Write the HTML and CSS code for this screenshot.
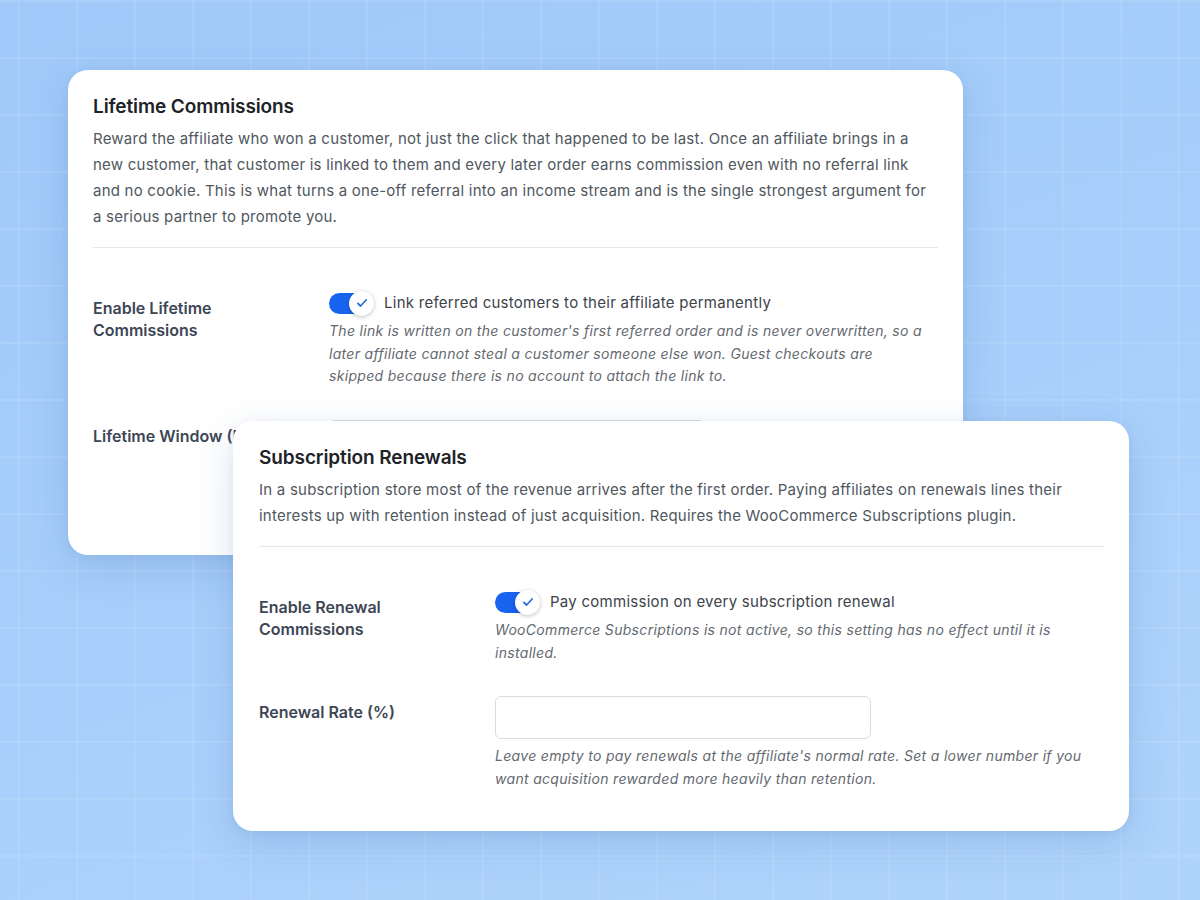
FILE: index.html
```html
<!DOCTYPE html>
<html lang="en">
<head>
<meta charset="utf-8">
<title>Affiliate settings</title>
<link rel="stylesheet" href="styles.css">
</head>
<body>
<main class="stage">

  <section class="card card-lifetime">
    <h2 class="card-title">Lifetime Commissions</h2>
    <p class="card-desc">Reward the affiliate who won a customer, not just the click that happened to be last. Once an affiliate brings in a new customer, that customer is linked to them and every later order earns commission even with no referral link and no cookie. This is what turns a one-off referral into an income stream and is the single strongest argument for a serious partner to promote you.</p>
    <hr class="divider">
    <div class="rows">
      <div class="row">
        <div class="row-label">Enable Lifetime<br>Commissions</div>
        <div class="row-field">
          <label class="toggle-line">
            <span class="toggle" aria-checked="true" role="switch">
              <span class="knob">
                <svg viewBox="0 0 24 24" width="18" height="18"><path d="M6.5 12.5l3.5 3.5 7.5-8" fill="none" stroke="#2b6fd6" stroke-width="2.4" stroke-linecap="round" stroke-linejoin="round"/></svg>
              </span>
            </span>
            <span>Link referred customers to their affiliate permanently</span>
          </label>
          <p class="hint">The link is written on the customer's first referred order and is never overwritten, so a later affiliate cannot steal a customer someone else won. Guest checkouts are skipped because there is no account to attach the link to.</p>
        </div>
      </div>
      <div class="row">
        <div class="row-label">Lifetime Window (Days)</div>
        <div class="row-field">
          <input class="text-input" type="text">
        </div>
      </div>
    </div>
  </section>

  <section class="card card-renewals">
    <h2 class="card-title">Subscription Renewals</h2>
    <p class="card-desc">In a subscription store most of the revenue arrives after the first order. Paying affiliates on renewals lines their interests up with retention instead of just acquisition. Requires the WooCommerce Subscriptions plugin.</p>
    <hr class="divider">
    <div class="rows">
      <div class="row">
        <div class="row-label">Enable Renewal<br>Commissions</div>
        <div class="row-field">
          <label class="toggle-line">
            <span class="toggle" aria-checked="true" role="switch">
              <span class="knob">
                <svg viewBox="0 0 24 24" width="18" height="18"><path d="M6.5 12.5l3.5 3.5 7.5-8" fill="none" stroke="#2b6fd6" stroke-width="2.4" stroke-linecap="round" stroke-linejoin="round"/></svg>
              </span>
            </span>
            <span>Pay commission on every subscription renewal</span>
          </label>
          <p class="hint">WooCommerce Subscriptions is not active, so this setting has no effect until it is installed.</p>
        </div>
      </div>
      <div class="row">
        <div class="row-label">Renewal Rate (%)</div>
        <div class="row-field">
          <input class="text-input" type="text">
          <p class="hint">Leave empty to pay renewals at the affiliate's normal rate. Set a lower number if you want acquisition rewarded more heavily than retention.</p>
        </div>
      </div>
    </div>
  </section>

</main>
</body>
</html>
```

FILE: styles.css
```css
* {
  box-sizing: border-box;
}

html,
body {
  margin: 0;
  height: 100%;
}

body {
  font-family: Inter, "Noto Sans", "Liberation Sans", sans-serif;
  color: #1d2327;
  background-color: #a6cdfa;
  background-image:
    linear-gradient(to right, rgba(255, 255, 255, 0.09) 2px, transparent 2px),
    linear-gradient(to bottom, rgba(255, 255, 255, 0.09) 2px, transparent 2px),
    linear-gradient(160deg, #a0c9f9 0%, #a8cffb 55%, #afd4fc 100%);
  background-size: 58px 57px, 58px 57px, 100% 100%;
  background-position: 18px 0, 0 0, 0 0;
  overflow: hidden;
}

.stage {
  position: relative;
  width: 1200px;
  height: 900px;
}

/* floating settings panels */
.card {
  position: absolute;
  background: #ffffff;
  border-radius: 20px;
  padding: 25px 25px 24px;
  box-shadow: 0 12px 40px rgba(40, 80, 140, 0.16), 0 2px 8px rgba(40, 80, 140, 0.06);
}

.card-lifetime {
  left: 68px;
  top: 70px;
  width: 895px;
  height: 485px;
  overflow: hidden;
}

.card-renewals {
  left: 233px;
  top: 421px;
  width: 896px;
  padding-left: 26px;
}

.card-title {
  margin: 0;
  font-size: 19px;
  line-height: 24px;
  font-weight: 600;
  color: #1d2327;
  letter-spacing: -0.1px;
}

.card-desc {
  margin: 7px 0 0;
  font-size: 15px;
  line-height: 26px;
  letter-spacing: 0.23px;
  color: #50575e;
}

.divider {
  margin: 17px 0 0;
  border: 0;
  border-top: 1px solid #e6e8ea;
}

.rows {
  margin-top: 29px;
}

.row {
  display: grid;
  grid-template-columns: 236px 1fr;
}

.row-label {
  padding: 20px 10px 15px 0;
  font-size: 16px;
  line-height: 22px;
  font-weight: 600;
  color: #3d4655;
}

.row-field {
  padding: 15px 10px 17px 0;
}

.toggle-line {
  display: flex;
  align-items: center;
  gap: 11px;
  font-size: 15px;
  line-height: 22px;
  letter-spacing: 0.27px;
  color: #3c434a;
}

.toggle {
  position: relative;
  flex: none;
  width: 44px;
  height: 21px;
  border-radius: 11px;
  background: #1863f0;
}

.knob {
  position: absolute;
  right: -1px;
  top: 50%;
  width: 25px;
  height: 25px;
  margin-top: -12.5px;
  border-radius: 50%;
  background: #ffffff;
  box-shadow: 0 1px 4px rgba(0, 0, 0, 0.25);
  display: flex;
  align-items: center;
  justify-content: center;
}

.hint {
  margin: 6px 0 0;
  font-size: 14px;
  line-height: 22.5px;
  letter-spacing: 0.31px;
  font-style: italic;
  color: #646970;
}

.text-input {
  display: block;
  width: 376px;
  height: 43px;
  margin: 0;
  border: 1px solid #dcdcde;
  border-radius: 6px;
  background: #ffffff;
  font: inherit;
}
```
